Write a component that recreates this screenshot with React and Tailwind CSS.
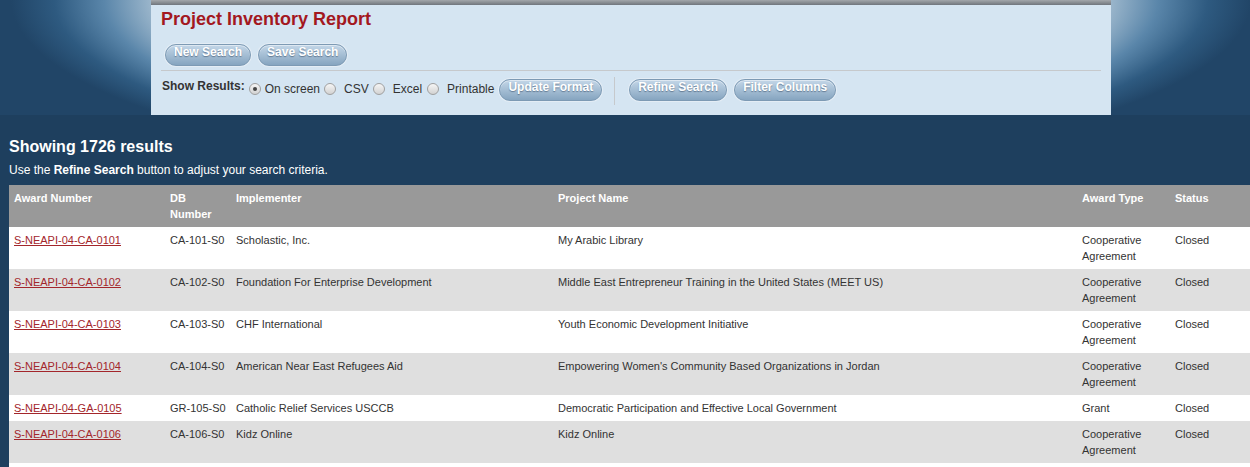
import React from "react";

const rows = [
  ["S-NEAPI-04-CA-0101", "CA-101-S0", "Scholastic, Inc.", "My Arabic Library", "Cooperative Agreement", "Closed"],
  ["S-NEAPI-04-CA-0102", "CA-102-S0", "Foundation For Enterprise Development", "Middle East Entrepreneur Training in the United States (MEET US)", "Cooperative Agreement", "Closed"],
  ["S-NEAPI-04-CA-0103", "CA-103-S0", "CHF International", "Youth Economic Development Initiative", "Cooperative Agreement", "Closed"],
  ["S-NEAPI-04-CA-0104", "CA-104-S0", "American Near East Refugees Aid", "Empowering Women's Community Based Organizations in Jordan", "Cooperative Agreement", "Closed"],
  ["S-NEAPI-04-GA-0105", "GR-105-S0", "Catholic Relief Services USCCB", "Democratic Participation and Effective Local Government", "Grant", "Closed"],
  ["S-NEAPI-04-CA-0106", "CA-106-S0", "Kidz Online", "Kidz Online", "Cooperative Agreement", "Closed"],
];

const Btn = ({ children, className = "" }) => (
  <button
    className={`h-[22px] rounded-full border border-[#7d9ab4] bg-linear-to-b from-[#c4d7e8] to-[#86a5c0] px-[8px] pb-[5px] text-[12px] font-bold leading-[15px] text-white [text-shadow:0_1px_1px_rgba(40,60,85,0.5)] shadow-[0_0_0_1px_#e4edf5,inset_0_1px_0_rgba(255,255,255,0.45)] ${className}`}
  >
    {children}
  </button>
);

const Radio = ({ checked, className = "" }) => (
  <span
    className={`mt-[6px] inline-flex h-[12px] w-[12px] items-center justify-center rounded-full border border-[#a0a0a0] bg-linear-to-b from-[#f6f6f6] to-[#d2d2d2] ${className}`}
  >
    {checked && <span className="h-[4px] w-[4px] rounded-full bg-[#444]" />}
  </span>
);

const Label = ({ children, className = "" }) => (
  <span className={`mt-[4px] text-[12px] leading-[16px] text-[#333] ${className}`}>{children}</span>
);

const cell = "px-[5px] pb-[5px] pt-[5px]";

export default function App() {
  return (
    <div className="min-h-screen w-full overflow-hidden bg-[#1e3f5e] font-['Liberation_Sans',Arial,sans-serif]">
      <div className="w-[1262px]">
        {/* header band with glow */}
        <div className="h-[115px] bg-[radial-gradient(620px_175px_at_50%_0%,#c8d9e6_0%,#a6bed1_76%,#5a86aa_85%,#2e5a80_93%,#214567_100%)]">
          <div className="mx-auto h-[115px] w-[960px] bg-[#d5e5f2]">
            <div className="h-[5px] bg-linear-to-b from-[#a3a7ab] to-[#70767d]" />
            <div className="px-[10px]">
              <h1 className="mt-[3px] text-[18px] font-bold leading-[22px] text-[#a3181f]">
                Project Inventory Report
              </h1>

              <div className="mt-[14px] flex">
                <Btn className="ml-[4px]">New Search</Btn>
                <Btn className="ml-[7px]">Save Search</Btn>
              </div>

              <div className="mt-[4px] h-px bg-[#c6c9cc]" />

              <div className="mt-[6px] flex items-start">
                <span className="ml-[1px] mt-[1px] text-[12px] font-bold leading-[16px] text-[#333]">
                  Show Results:
                </span>
                <Radio checked className="ml-[4px]" />
                <Label className="ml-[4px]">On screen</Label>
                <Radio className="ml-[4px]" />
                <Label className="ml-[8px]">CSV</Label>
                <Radio className="ml-[4px]" />
                <Label className="ml-[8px]">Excel</Label>
                <Radio className="ml-[5px]" />
                <Label className="ml-[8px]">Printable</Label>
                <Btn className="ml-[5px] mt-[2px]">Update Format</Btn>
                <div className="ml-[12px] h-[28px] w-px bg-[#c6c9cc]" />
                <Btn className="ml-[14px] mt-[2px]">Refine Search</Btn>
                <Btn className="ml-[7px] mt-[2px] px-[7px]">Filter Columns</Btn>
              </div>
            </div>
          </div>
        </div>

        {/* results */}
        <div className="pl-[9px]">
          <h2 className="mt-[22px] text-[16px] font-bold leading-[20px] text-white">Showing 1726 results</h2>
          <p className="mt-[5px] text-[12px] leading-[16px] text-white">
            Use the <span className="font-bold">Refine Search</span> button to adjust your search criteria.
          </p>

          <table className="mt-[7px] w-[1244px] table-fixed border-collapse text-[11px] leading-[16px]">
            <colgroup>
              <col className="w-[156px]" />
              <col className="w-[66px]" />
              <col className="w-[322px]" />
              <col className="w-[524px]" />
              <col className="w-[93px]" />
              <col className="w-[83px]" />
            </colgroup>
            <thead>
              <tr className="bg-[#999999] text-left align-top font-bold text-white">
                <th className={cell}>Award Number</th>
                <th className={cell}>DB Number</th>
                <th className={cell}>Implementer</th>
                <th className={cell}>Project Name</th>
                <th className={cell}>Award Type</th>
                <th className={cell}>Status</th>
              </tr>
            </thead>
            <tbody>
              {rows.map((r, i) => (
                <tr key={r[0]} className={`align-top text-[#333] ${i % 2 ? "bg-[#dfdfdf]" : "bg-white"}`}>
                  <td className={cell}>
                    <a href="#" className="text-[#a3262b] underline">{r[0]}</a>
                  </td>
                  <td className={cell}>{r[1]}</td>
                  <td className={cell}>{r[2]}</td>
                  <td className={cell}>{r[3]}</td>
                  <td className={cell}>{r[4]}</td>
                  <td className={cell}>{r[5]}</td>
                </tr>
              ))}
              <tr className="bg-white">
                <td colSpan={6} className="h-[26px]" />
              </tr>
            </tbody>
          </table>
        </div>
      </div>
    </div>
  );
}
